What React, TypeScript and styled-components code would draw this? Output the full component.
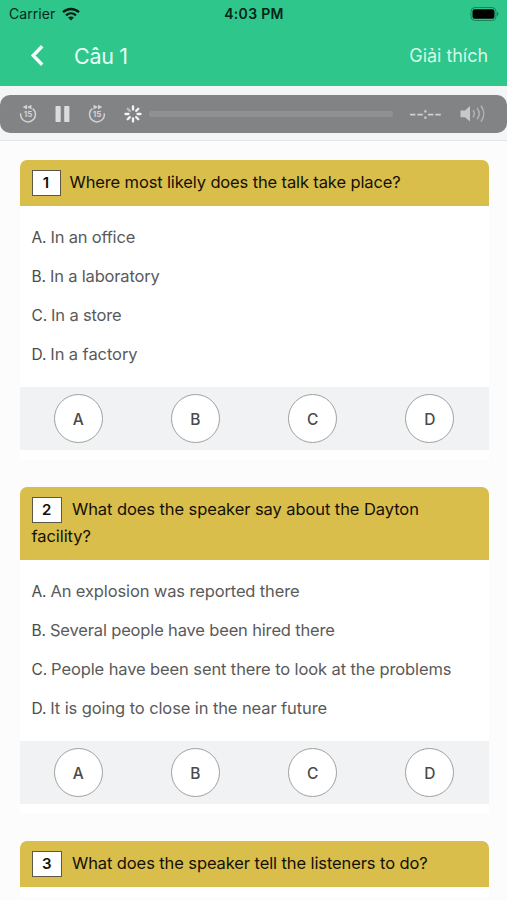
import React from "react";
import styled, { createGlobalStyle } from "styled-components";

const GlobalStyle = createGlobalStyle`
  * { box-sizing: border-box; }
  body {
    margin: 0;
    background: #fcfcfc;
    font-family: Inter, "Noto Sans", sans-serif;
    -webkit-font-smoothing: antialiased;
  }
`;

const Screen = styled.div`
  width: 507px;
  height: 900px;
  overflow: hidden;
  background: #fcfcfc;
`;

const TopBar = styled.header`
  height: 86px;
  background: #2ec68a;
`;

const StatusBar = styled.div`
  display: grid;
  grid-template-columns: 1fr auto 1fr;
  align-items: center;
  height: 27px;
  padding: 0 8px 0 9px;
  font-size: 14px;
  line-height: 27px;
  color: #08291c;
`;

const Carrier = styled.div`
  display: flex;
  align-items: center;
  gap: 7px;
  letter-spacing: 0.05px;
`;

const Clock = styled.div`
  font-weight: 600;
  font-size: 14px;
  letter-spacing: 0.3px;
  color: #062417;
`;

const Battery = styled.svg`
  justify-self: end;
`;

const NavBar = styled.nav`
  display: flex;
  align-items: center;
  height: 57px;
  padding: 0 19px 0 30px;
  color: #e6fff4;
`;

const PageTitle = styled.h1`
  flex: 1;
  margin: 0 0 0 30px;
  font-size: 21.5px;
  font-weight: 400;
  letter-spacing: -0.3px;
`;

const Explain = styled.span`
  font-size: 18px;
  letter-spacing: -0.05px;
  color: #d3f9e8;
`;

const PlayerStrip = styled.div`
  height: 55px;
  padding-top: 9px;
  background: #f4f5f6;
  border-bottom: 1px solid #e4e6e8;
`;

const Player = styled.div`
  display: flex;
  align-items: center;
  height: 38px;
  padding: 0 20px 0 19px;
  border-radius: 10px;
  background: #828384;
  color: #d2d2d2;
`;

const Track = styled.div`
  flex: 1;
  height: 6px;
  margin: 0 17px 0 7px;
  border-radius: 2px;
  background: #8f9091;
`;

const Pause = styled.svg`
  margin: 0 17px 0 18px;
`;

const Spinner = styled.svg`
  margin-left: 18px;
`;

const Volume = styled.svg`
  margin-left: 19px;
`;

const Questions = styled.main`
  display: flex;
  flex-direction: column;
  gap: 27px;
  padding: 19px 18.5px 0 19.5px;
`;

const Card = styled.section`
  padding-bottom: 10px;
  background: #fff;
`;

const Prompt = styled.h2<{ $tracking: number }>`
  margin: 0;
  padding: 9px 12px 10px;
  border-radius: 7px 7px 0 0;
  background: #d9be4c;
  color: #141005;
  font-size: 16.5px;
  font-weight: 400;
  line-height: 27px;
  letter-spacing: ${(p) => p.$tracking}px;
`;

const Index = styled.span<{ $gap: number }>`
  display: inline-block;
  width: ${(p) => 30.5 + (p.$gap - 10) * 1.5}px;
  height: 26px;
  margin: -6px ${(p) => p.$gap}px -6px 0;
  border: 1px solid #5c5847;
  background: #fff;
  font-size: 15px;
  font-weight: 600;
  line-height: 24px;
  letter-spacing: 0;
  text-align: center;
`;

const Options = styled.ul`
  margin: 0;
  padding: 12px 12px 13px;
  list-style: none;
`;

const Option = styled.li<{ $tracking: number }>`
  height: 39px;
  font-size: 16.5px;
  line-height: 39px;
  letter-spacing: ${(p) => p.$tracking}px;
  white-space: nowrap;
  color: #5a5a5a;
`;

const Letter = styled.span`
  margin-right: 4px;
  font-size: 15.5px;
  letter-spacing: -0.1px;
  color: #4c4c4c;
`;

const AnswerBar = styled.div`
  display: grid;
  grid-template-columns: repeat(4, 1fr);
  place-items: center;
  height: 63px;
  background: #f0f2f4;
`;

const Answer = styled.button`
  width: 49px;
  height: 49px;
  padding: 1px 0 0;
  border: 1px solid #a0a0a0;
  border-radius: 50%;
  background: #fff;
  color: #4a4a4a;
  font: 500 15.5px Inter, sans-serif;
`;

const Skip = ({ forward = false }: { forward?: boolean }) => (
  <svg width="18" height="20" viewBox="0 0 18 20" fill="none">
    <g transform={forward ? "matrix(-1 0 0 1 18 0)" : undefined}>
      <path d="M13.6 4.6A7.4 7.4 0 1 1 1.7 9.4" stroke="currentColor" strokeWidth="1.5" />
      <path d="M8 .8v4.6L3.6 3.1zM12.5.8v4.6L8 3.1z" fill="currentColor" />
    </g>
    <text x="9" y="13.4" textAnchor="middle" fontSize="8" fontWeight="700" fill="currentColor">15</text>
  </svg>
);

const questions = [
  {
    text: "Where most likely does the talk take place?",
    tracking: -0.13,
    gap: 9,
    options: [
      ["In an office", -0.2],
      ["In a laboratory", -0.18],
      ["In a store", -0.18],
      ["In a factory", -0.08],
    ],
  },
  {
    text: "What does the speaker say about the Dayton facility?",
    tracking: -0.08,
    gap: 10,
    options: [
      ["An explosion was reported there", -0.13],
      ["Several people have been hired there", -0.16],
      ["People have been sent there to look at the problems", -0.11],
      ["It is going to close in the near future", -0.1],
    ],
  },
  {
    text: "What does the speaker tell the listeners to do?",
    tracking: -0.1,
    gap: 10,
    options: [],
  },
] as { text: string; tracking: number; gap: number; options: [string, number][] }[];

const letters = ["A", "B", "C", "D"];

export default function App() {
  return (
    <Screen>
      <GlobalStyle />
      <TopBar>
        <StatusBar>
          <Carrier>
            Carrier
            <svg width="18" height="14" viewBox="0 0 18 14" fill="none" stroke="#041f14" strokeWidth="2.3">
              <path d="M1 5.2C5.6.9 12.4.9 17 5.2" />
              <path d="M4 8.4c2.9-2.6 7.1-2.6 10 0" />
              <path d="M9 13.5 6.1 10.6c1.6-1.4 4.2-1.4 5.8 0z" fill="#041f14" stroke="none" />
            </svg>
          </Carrier>
          <Clock>4:03 PM</Clock>
          <Battery width="29" height="14" viewBox="0 0 29 14">
            <rect x="1" y=".5" width="25" height="13" rx="4" fill="none" stroke="#168557" />
            <rect x="2.5" y="2.2" width="22" height="9.6" rx="2.2" fill="#000" />
            <path d="M27 5v4c2-.8 2-3.2 0-4z" fill="#168557" />
          </Battery>
        </StatusBar>
        <NavBar>
          <svg width="14" height="22" viewBox="0 0 14 22" fill="none">
            <path d="M12.2 1.2 3.2 10.5l9 9.3" stroke="#f4fffa" strokeWidth="3.4" />
          </svg>
          <PageTitle>Câu 1</PageTitle>
          <Explain>Giải thích</Explain>
        </NavBar>
      </TopBar>
      <PlayerStrip>
        <Player>
          <Skip />
          <Pause width="16" height="16" viewBox="0 0 16 16" fill="#dcdcdc">
            <rect x=".5" width="5.2" height="16" rx=".8" />
            <rect x="9.2" width="5.2" height="16" rx=".8" />
          </Pause>
          <Skip forward />
          <Spinner width="18" height="18" viewBox="0 0 18 18" stroke="#f4f4f4" strokeWidth="2.3" strokeLinecap="round">
            {[0, 45, 90, 135, 180, 225, 270, 315].map((angle) => (
              <path key={angle} d="M9 1.5v3" transform={`rotate(${angle} 9 9)`} opacity={angle === 315 ? 0.5 : 1} />
            ))}
          </Spinner>
          <Track />
          <svg width="31" height="10" viewBox="0 0 31 10" fill="#d0d0d0">
            <path d="M0 4.7h5.4v1.9H0zM7.4 4.7h5.4v1.9H7.4zM18 4.7h5.4v1.9H18zM25.4 4.7h5.4v1.9h-5.4zM14.3 1.3h2.2v2.2h-2.2zM14.3 7.6h2.2v2.2h-2.2z" />
          </svg>
          <Volume width="27" height="18" viewBox="0 0 27 18" fill="none">
            <path d="M.5 5.5H5L10 1v15.4L5 12.2H.5z" fill="#c8c8c8" />
            <g stroke="#b4b4b4" strokeWidth="1.5">
              <path d="M13 5.2c1.7 2.2 1.7 4.8 0 7" />
              <path d="M17 3c2.6 3.4 2.6 8 0 11.4" />
              <path d="M21 .8c3.6 4.8 3.6 11 0 15.8" />
            </g>
          </Volume>
        </Player>
      </PlayerStrip>
      <Questions>
        {questions.map((question, number) => (
          <Card key={question.text}>
            <Prompt $tracking={question.tracking}>
              <Index $gap={question.gap}>{number + 1}</Index>
              {question.text}
            </Prompt>
            {question.options.length > 0 && (
              <>
                <Options>
                  {question.options.map(([text, tracking], i) => (
                    <Option key={text} $tracking={tracking}>
                      <Letter>{letters[i]}.</Letter>
                      {text}
                    </Option>
                  ))}
                </Options>
                <AnswerBar>
                  {letters.map((letter) => (
                    <Answer key={letter}>{letter}</Answer>
                  ))}
                </AnswerBar>
              </>
            )}
          </Card>
        ))}
      </Questions>
    </Screen>
  );
}
